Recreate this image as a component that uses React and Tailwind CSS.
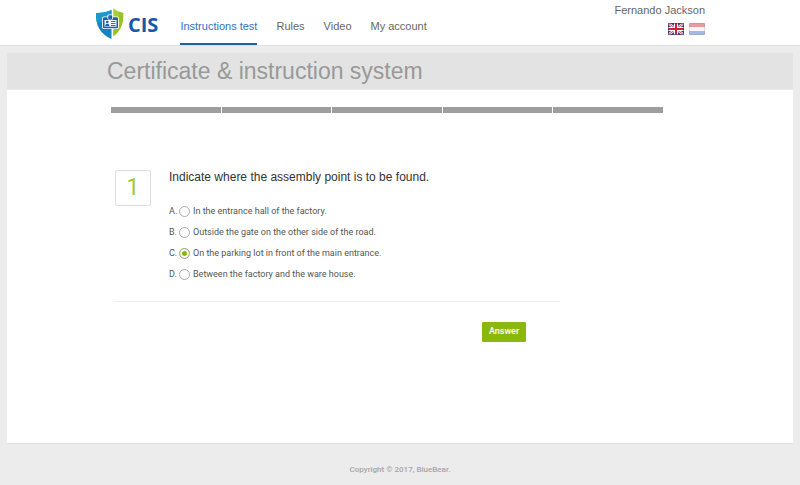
import { useState } from 'react';

const navItems = ['Instructions test', 'Rules', 'Video', 'My account'];

const answers = [
  { key: 'A', text: 'In the entrance hall of the factory.' },
  { key: 'B', text: 'Outside the gate on the other side of the road.' },
  { key: 'C', text: 'On the parking lot in front of the main entrance.' },
  { key: 'D', text: 'Between the factory and the ware house.' },
];

function Logo() {
  return (
    <a href="#" aria-label="CIS" className="flex items-center gap-1 pt-[3px]">
      <svg viewBox="0 0 29 33" className="h-[33px] w-[29px]" aria-hidden="true">
        <path d="M1 5C6 5.300 12 4 16.500 2V31C5 26 .5 17 1 5Z" fill="#1583c2" />
        <path d="M1 5C6 5.300 12 4 16.500 2V11L2.200 15C1.200 11.500 .9 8.500 1 5Z" fill="#1b98cf" />
        <path d="M18.300 0C21 2.500 24.500 4.500 28.200 5C28.700 15.500 25.500 23.500 18.300 28Z" fill="#a9cf38" />
        <path d="M24 3.500C25.500 4.300 26.800 4.800 28.200 5C28.700 15.500 25.500 23.500 18.300 28V23C23 18 24.800 11 24 3.500Z" fill="#97c421" />
        <rect x="7.200" y="8.500" width="16.600" height="12.500" rx="1.500" fill="#fff" />
        <rect x="8" y="9.300" width="15" height="10.900" rx="1" fill="#1b62b0" />
        <rect x="12.500" y="6.500" width="5.500" height="5" rx="1" fill="#fff" />
        <rect x="13.300" y="7.300" width="3.900" height="4" rx=".8" fill="#1b62b0" />
        <rect x="9.500" y="12" width="12" height="6.700" fill="#f4f9fd" />
        <circle cx="12.300" cy="14" r="1.300" fill="#1b62b0" />
        <path d="M10.100 18.200C10.100 15 14.500 15 14.500 18.200Z" fill="#1b62b0" />
        <path d="M16 13.500H20.500M16 15.500H20.500M16 17.500H20.500" stroke="#1b62b0" strokeWidth=".9" />
      </svg>
      <span className="pt-px font-['Open_Sans',sans-serif] text-xl leading-6 font-bold text-[#1758a8]">CIS</span>
    </a>
  );
}

function BritishFlag() {
  return (
    <svg viewBox="0 0 16 12" className="h-3 w-4" aria-hidden="true">
      <rect width="16" height="12" rx="1" fill="#34488a" />
      <path d="M1 .7L15 11.300M15 .7L1 11.300" stroke="#f3e8ee" strokeWidth="2.400" />
      <path d="M1 .7L15 11.300M15 .7L1 11.300" stroke="#d5465b" strokeWidth=".9" />
      <path d="M8 0V12M0 6H16" stroke="#fff" strokeWidth="4" />
      <path d="M8 0V12M0 6H16" stroke="#d21f35" strokeWidth="2" />
      <rect x=".5" y=".5" width="15" height="11" rx="1" fill="none" stroke="#33417c" strokeOpacity=".6" />
    </svg>
  );
}

function DutchFlag() {
  return (
    <svg viewBox="0 0 16 12" className="h-3 w-4" aria-hidden="true">
      <rect width="16" height="12" rx="1" fill="#f7f7f8" />
      <path d="M0 1Q0 0 1 0H15Q16 0 16 1V4H0Z" fill="#e89a9d" />
      <path d="M0 8H16V11Q16 12 15 12H1Q0 12 0 11Z" fill="#a3bbe2" />
      <rect x=".5" y=".5" width="15" height="11" rx="1" fill="none" stroke="#8a8aa0" strokeOpacity=".25" />
    </svg>
  );
}

export default function App() {
  const [choice, setChoice] = useState('C');

  return (
    <div className="flex min-h-screen flex-col bg-[#ececec] font-['Liberation_Sans',Arial,sans-serif]">
      <header className="border-b border-[#dfdfdf] bg-white">
        <div className="mx-auto flex h-[45px] max-w-[610px] justify-between">
          <div className="flex gap-[22px]">
            <Logo />
            <nav className="flex gap-[19px] text-[11px] text-[#666]">
              {navItems.map((item, i) => (
                <a
                  key={item}
                  href="#"
                  aria-current={i === 0 ? 'page' : undefined}
                  className={
                    i === 0
                      ? 'border-b-2 border-[#1a62ae] pt-[18px] leading-4 text-[#3570bd]'
                      : 'pt-[18px] leading-4'
                  }
                >
                  {item}
                </a>
              ))}
            </nav>
          </div>
          <div className="flex flex-col items-end gap-[5px] pt-[2px]">
            <span className="text-[11px] leading-4 text-[#666]">Fernando Jackson</span>
            <div className="flex gap-[5px]">
              <button type="button" aria-label="English"><BritishFlag /></button>
              <button type="button" aria-label="Nederlands"><DutchFlag /></button>
            </div>
          </div>
        </div>
      </header>

      <main className="mx-[7px] mt-[7px] flex-1 border-b border-[#dcdcdc] bg-white">
        <div className="border-b border-[#ebebeb] bg-[#e3e3e3]">
          <h1 className="mx-auto max-w-[610px] px-3 text-[23px] leading-9 text-[#999]">
            Certificate &amp; instruction system
          </h1>
        </div>

        <div className="mx-auto max-w-[610px] px-4 pt-[17px]">
          <div role="progressbar" aria-label="Progress" aria-valuemin={0} aria-valuemax={5} aria-valuenow={0} className="flex max-w-[552px] gap-px">
            {[1, 2, 3, 4, 5].map((n) => (
              <span key={n} className="h-[6px] flex-1 bg-[#9e9e9e]" />
            ))}
          </div>

          <form className="mt-[57px] ml-1 max-w-[445px]" onSubmit={(e) => e.preventDefault()}>
            <div className="flex gap-[18px] border-b border-[#ededed] pb-4">
              <div className="flex h-9 w-9 items-center justify-center rounded-xs border border-[#dedede] font-['Roboto',sans-serif] text-[23px] leading-8 text-[#a0c936]">
                1
              </div>
              <fieldset>
                <legend className="text-[12px] leading-[14px] text-[#333]">
                  Indicate where the assembly point is to be found.
                </legend>
                <div className="mt-[17px] flex flex-col">
                  {answers.map(({ key, text }) => (
                    <label key={key} className="flex h-[21px] items-center font-['Roboto',sans-serif] text-[9px] text-[#555]">
                      <span className="w-[10px]">{key}.</span>
                      <input
                        type="radio"
                        name="answer"
                        value={key}
                        checked={choice === key}
                        onChange={() => setChoice(key)}
                        className="mr-[3px] h-[11px] w-[11px] appearance-none rounded-full border border-[#aaa] bg-white checked:bg-[#86b80b] checked:shadow-[inset_0_0_0_2px_white]"
                      />
                      {text}
                    </label>
                  ))}
                </div>
              </fieldset>
            </div>
            <div className="flex justify-end pt-5 pr-[34px]">
              <button type="submit" className="h-5 w-11 rounded-[1px] bg-[#8bb80c] font-['Roboto',sans-serif] text-[9px] font-medium text-white">
                Answer
              </button>
            </div>
          </form>
        </div>
      </main>

      <footer className="flex h-[41px] items-center justify-center pt-[10px] font-['Roboto',sans-serif] text-[8px] font-medium text-[#a6a6a6]">
        Copyright © 2017, BlueBear.
      </footer>
    </div>
  );
}
